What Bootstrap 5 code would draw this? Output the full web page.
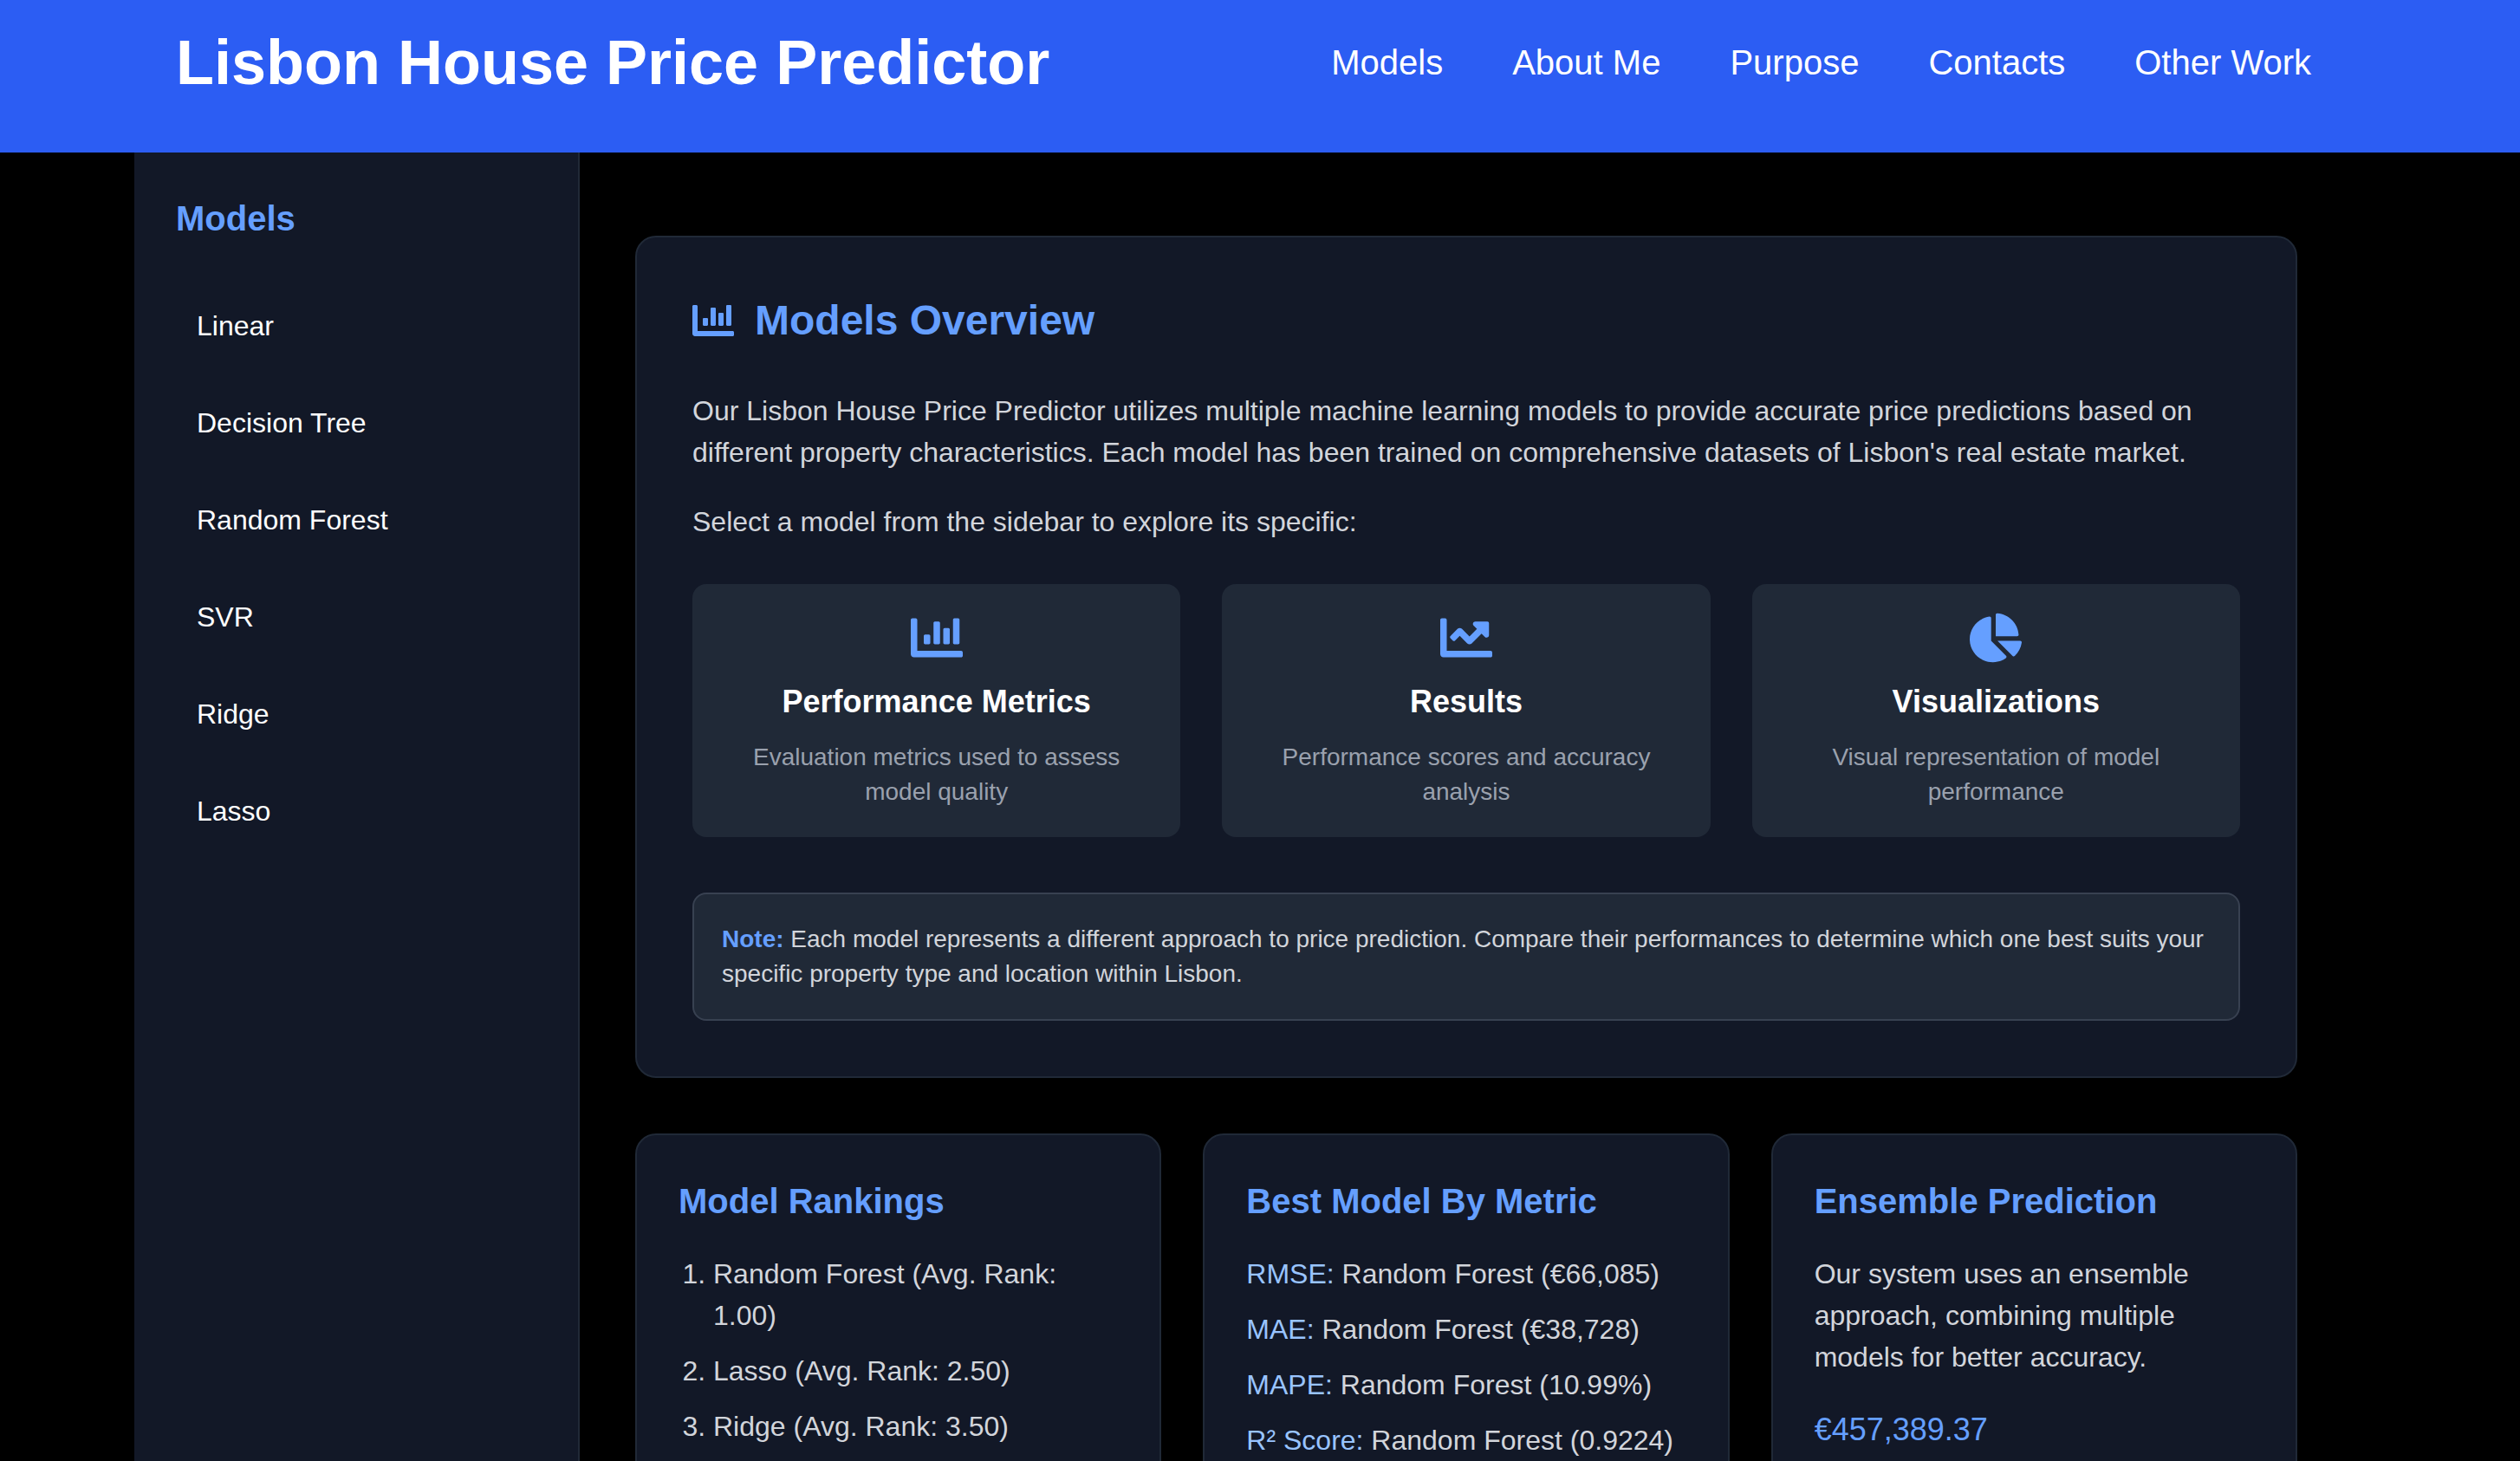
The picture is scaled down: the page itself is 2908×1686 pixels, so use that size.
<!DOCTYPE html>
<html lang="en">
<head>
<meta charset="utf-8">
<meta name="viewport" content="width=device-width, initial-scale=1">
<title>Lisbon House Price Predictor</title>
<link rel="stylesheet" href="https://cdn.jsdelivr.net/npm/bootstrap@5.3.0/dist/css/bootstrap.min.css">
<style>
  :root {
    --brand: #2c5df3;
    --accent: #659fff;
    --accent-soft: #99c4ff;
    --panel: #121827;
    --tile: #202937;
    --line: #202937;
    --line-soft: #384151;
    --copy: #d2d5db;
    --muted: #9aa1ae;
  }
  html { scrollbar-width: none; }
  html::-webkit-scrollbar { display: none; }
  body {
    font-family: "Liberation Sans", Arial, sans-serif;
    font-size: 32px;
    line-height: 48px;
    background: #000;
    color: var(--copy);
  }
  .page-width { max-width: 2598px; }
  .site-header { background: var(--brand); padding: 32px 0 64px; }
  .site-header .page-width { padding: 0 86px 0 48px; }
  .site-title { font-size: 72px; line-height: 80px; }
  .site-nav { gap: 80px; font-size: 40px; line-height: 56px; }
  .layout { min-height: calc(100vh - 176px); }
  .side-panel { flex: 0 0 514px; padding: 48px; background: var(--panel); border-right: 2px solid var(--line); }
  .side-links { gap: 16px; margin-top: 48px; }
  .side-links .nav-link { padding: 24px; }
  .main-area { min-width: 0; padding: 96px 102px 64px 64px; }
  .stack { gap: 64px; }
  .panel { background: var(--panel); border: 2px solid var(--line); border-radius: 24px; }
  .panel-lg { padding: 64px; }
  .panel-md { padding: 48px; }
  .three-up { display: grid; grid-template-columns: repeat(3, minmax(0, 1fr)); gap: 48px; }
  .title-lg { font-size: 48px; line-height: 64px; gap: 24px; margin-bottom: 48px; }
  .title-md { font-size: 40px; line-height: 56px; color: var(--accent); }
  .title-sm { font-size: 36px; line-height: 56px; margin: 16px 0; }
  .accent { color: var(--accent); }
  .metric-name { color: var(--accent-soft); }
  .para { margin-bottom: 32px; }
  .tile { background: var(--tile); border-radius: 16px; padding: 32px; }
  .tile p { color: var(--muted); }
  .small-copy { font-size: 28px; line-height: 40px; }
  .note { background: var(--tile); border: 2px solid var(--line-soft); border-radius: 16px; padding: 32px; margin-top: 64px; }
  .ranks { padding-left: 40px; }
  .item-list { display: flex; flex-direction: column; gap: 16px; margin-top: 32px; }
  .metric-list { list-style: none; }
  .ensemble-copy { margin: 32px 0; }
  .price { font-size: 36px; line-height: 56px; }
  .icon-title { width: 48px; height: 48px; }
  .icon-tile { width: 60px; height: 60px; }
  svg { fill: var(--accent); display: block; }
</style>
</head>
<body>
<svg width="0" height="0" class="position-absolute" aria-hidden="true">
  <symbol id="chart-bar" viewBox="0 0 512 512"><path d="M332.8 320h38.4c6.4 0 12.8-6.4 12.8-12.8V172.8c0-6.4-6.4-12.8-12.8-12.8h-38.4c-6.4 0-12.8 6.4-12.8 12.8v134.4c0 6.4 6.4 12.8 12.8 12.8zm96 0h38.4c6.4 0 12.8-6.4 12.8-12.8V76.8c0-6.4-6.4-12.8-12.8-12.8h-38.4c-6.4 0-12.8 6.4-12.8 12.8v230.4c0 6.4 6.4 12.8 12.8 12.8zm-288 0h38.4c6.4 0 12.8-6.4 12.8-12.8v-70.4c0-6.4-6.4-12.8-12.8-12.8h-38.4c-6.4 0-12.8 6.4-12.8 12.8v70.4c0 6.4 6.4 12.8 12.8 12.8zm96 0h38.4c6.4 0 12.8-6.4 12.8-12.8V108.8c0-6.4-6.4-12.8-12.8-12.8h-38.4c-6.4 0-12.8 6.4-12.8 12.8v198.4c0 6.4 6.4 12.8 12.8 12.8zM496 384H64V80c0-8.84-7.16-16-16-16H16C7.16 64 0 71.16 0 80v336c0 17.67 14.33 32 32 32h464c8.84 0 16-7.16 16-16v-32c0-8.84-7.16-16-16-16z"/></symbol>
  <symbol id="chart-line" viewBox="0 0 512 512"><path d="M496 384H64V80c0-8.84-7.16-16-16-16H16C7.16 64 0 71.16 0 80v336c0 17.67 14.33 32 32 32h464c8.84 0 16-7.16 16-16v-32c0-8.84-7.16-16-16-16zM464 96H345.94c-21.38 0-32.09 25.85-16.97 40.97l32.4 32.4L288 242.75l-73.37-73.37c-12.5-12.5-32.76-12.5-45.25 0l-68.69 68.69c-6.25 6.25-6.25 16.38 0 22.63l22.62 22.62c6.25 6.25 16.38 6.25 22.63 0L192 237.25l73.37 73.37c12.5 12.5 32.76 12.5 45.25 0l96-96 32.4 32.4c15.12 15.12 40.97 4.41 40.97-16.97V112c.01-8.84-7.15-16-15.99-16z"/></symbol>
  <symbol id="chart-pie" viewBox="0 0 544 512"><path d="M527.79 288H290.5l158.03 158.03c6.04 6.04 15.98 6.53 22.19.68 38.7-36.46 65.32-85.61 73.13-140.86 1.34-9.46-6.51-17.85-16.06-17.85zm-15.83-64.8C503.72 103.74 408.26 8.28 288.8.04 279.68-.59 272 7.1 272 16.24V240h223.77c9.14 0 16.82-7.68 16.19-16.8zM224 288V50.71c0-9.55-8.39-17.4-17.84-16.06C86.99 51.49-4.1 155.6.14 280.37 4.5 408.51 114.83 513.59 243.03 511.98c50.4-.63 96.97-16.87 135.26-44.03 7.9-5.6 8.42-17.23 1.57-24.08L224 288z"/></symbol>
</svg>

<header class="site-header text-white">
  <div class="page-width mx-auto d-flex justify-content-between align-items-center">
    <h1 class="site-title fw-bold mb-0">Lisbon House Price Predictor</h1>
    <nav class="site-nav d-flex" aria-label="Main">
      <a class="text-white text-decoration-none" href="#models">Models</a>
      <a class="text-white text-decoration-none" href="#about">About Me</a>
      <a class="text-white text-decoration-none" href="#purpose">Purpose</a>
      <a class="text-white text-decoration-none" href="#contacts">Contacts</a>
      <a class="text-white text-decoration-none" href="#work">Other Work</a>
    </nav>
  </div>
</header>

<div class="layout page-width mx-auto d-flex" id="models">
  <aside class="side-panel">
    <h2 class="title-md fw-bold mb-0">Models</h2>
    <nav class="side-links nav flex-column" aria-label="Models">
      <a class="nav-link text-white" href="#linear">Linear</a>
      <a class="nav-link text-white" href="#tree">Decision Tree</a>
      <a class="nav-link text-white" href="#forest">Random Forest</a>
      <a class="nav-link text-white" href="#svr">SVR</a>
      <a class="nav-link text-white" href="#ridge">Ridge</a>
      <a class="nav-link text-white" href="#lasso">Lasso</a>
    </nav>
  </aside>

  <main class="main-area flex-grow-1">
    <div class="stack d-flex flex-column">
      <section class="panel panel-lg">
        <h2 class="title-lg accent fw-bold d-flex align-items-center">
          <svg class="icon-title" aria-hidden="true"><use href="#chart-bar"/></svg>
          Models Overview
        </h2>
        <p class="para">Our Lisbon House Price Predictor utilizes multiple machine learning models to provide accurate price predictions based on different property characteristics. Each model has been trained on comprehensive datasets of Lisbon's real estate market.</p>
        <p class="mb-5">Select a model from the sidebar to explore its specific:</p>
        <div class="three-up text-center">
          <div class="tile">
            <svg class="icon-tile mx-auto" aria-hidden="true"><use href="#chart-bar"/></svg>
            <h3 class="title-sm fw-bold text-white">Performance Metrics</h3>
            <p class="small-copy mb-0">Evaluation metrics used to assess model quality</p>
          </div>
          <div class="tile">
            <svg class="icon-tile mx-auto" aria-hidden="true"><use href="#chart-line"/></svg>
            <h3 class="title-sm fw-bold text-white">Results</h3>
            <p class="small-copy mb-0">Performance scores and accuracy analysis</p>
          </div>
          <div class="tile">
            <svg class="icon-tile mx-auto" aria-hidden="true"><use href="#chart-pie"/></svg>
            <h3 class="title-sm fw-bold text-white">Visualizations</h3>
            <p class="small-copy mb-0">Visual representation of model performance</p>
          </div>
        </div>
        <div class="note">
          <p class="small-copy mb-0"><strong class="accent">Note:</strong> Each model represents a different approach to price prediction. Compare their performances to determine which one best suits your specific property type and location within Lisbon.</p>
        </div>
      </section>

      <div class="three-up">
        <section class="panel panel-md">
          <h2 class="title-md fw-bold mb-0">Model Rankings</h2>
          <ol class="ranks item-list mb-0">
            <li>Random Forest (Avg. Rank: 1.00)</li>
            <li>Lasso (Avg. Rank: 2.50)</li>
            <li>Ridge (Avg. Rank: 3.50)</li>
          </ol>
        </section>
        <section class="panel panel-md">
          <h2 class="title-md fw-bold mb-0">Best Model By Metric</h2>
          <ul class="metric-list item-list ps-0 mb-0">
            <li><span class="metric-name">RMSE:</span> Random Forest (€66,085)</li>
            <li><span class="metric-name">MAE:</span> Random Forest (€38,728)</li>
            <li><span class="metric-name">MAPE:</span> Random Forest (10.99%)</li>
            <li><span class="metric-name">R² Score:</span> Random Forest (0.9224)</li>
          </ul>
        </section>
        <section class="panel panel-md">
          <h2 class="title-md fw-bold mb-0">Ensemble Prediction</h2>
          <p class="ensemble-copy">Our system uses an ensemble approach, combining multiple models for better accuracy.</p>
          <p class="price accent mb-0">€457,389.37</p>
        </section>
      </div>
    </div>
  </main>
</div>
<script src="https://cdn.jsdelivr.net/npm/bootstrap@5.3.0/dist/js/bootstrap.bundle.min.js"></script>
</body>
</html>
